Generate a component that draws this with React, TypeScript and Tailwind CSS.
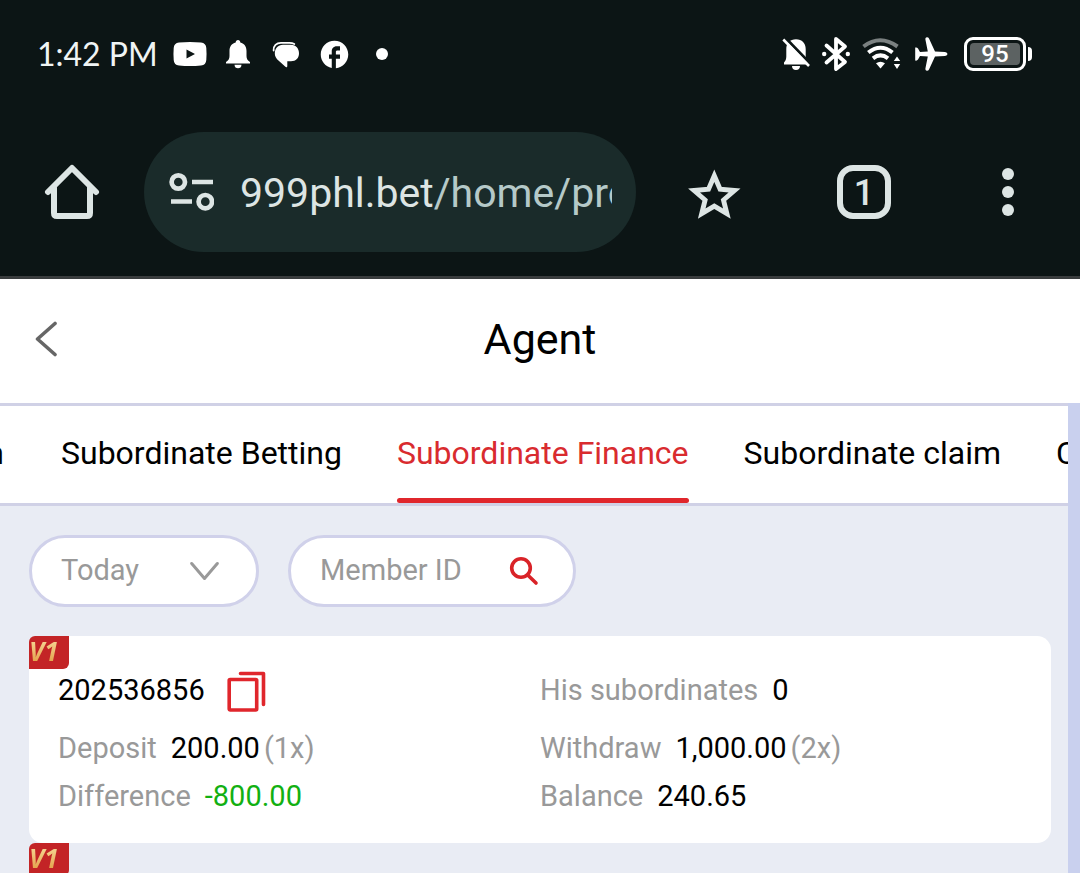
import React from "react";

const YouTubeIcon = () => (
  <svg width="34" height="36" viewBox="0 0 34 36" aria-hidden="true">
    <path fill="#fff" fillRule="evenodd" d="M6 6.500Q17 5.500 28 6.500Q33 7 33.300 12Q33.800 18 33.300 24Q33 29 28 29.500Q17 30.500 6 29.500Q1 29 .7 24Q.2 18 .7 12Q1 7 6 6.500ZM13.500 13.500V22.500L22 18Z" />
  </svg>
);

const BellIcon = () => (
  <svg width="26" height="36" viewBox="0 0 26 36" fill="#fff" aria-hidden="true">
    <path d="M13 4C14.400 4 15.300 5 15.300 6.600C19.500 7.600 21.500 11 21.500 15V20C21.500 22.500 22.500 24.500 25 26V27.500H1V26C3.500 24.500 4.500 22.500 4.500 20V15C4.500 11 6.500 7.600 10.700 6.600C10.700 5 11.600 4 13 4Z" />
    <path d="M9.500 28.700H16.500C16.500 31 15 32.300 13 32.300S9.500 31 9.500 28.700Z" />
  </svg>
);

const MessageIcon = () => (
  <svg width="28" height="36" viewBox="0 0 28 36" aria-hidden="true">
    <path d="M1.600 14.500C1.200 9.500 4.500 6.800 9 6.800H17.500C19.500 6.800 21 7.200 22.300 8" fill="none" stroke="#fff" strokeWidth="1.800" strokeLinecap="round" />
    <path d="M11 8.800H19C24 8.800 27 12.500 27 17.300S24 25.300 19 25.300H15.300V30C15.300 31.300 14.300 31.700 13.400 30.800L7 25C4 22.500 2.800 20 2.800 17.500C2.800 12.500 6 8.800 11 8.800Z" fill="#fff" />
  </svg>
);

const FacebookIcon = () => (
  <svg width="33" height="33" viewBox="0 0 24 24" aria-hidden="true">
    <path fill="#fff" d="M22 12c0-5.520-4.480-10-10-10S2 6.480 2 12c0 4.840 3.440 8.870 8 9.800V15H8v-3h2V9.500C10 7.570 11.570 6 13.500 6H16v3h-2c-.55 0-1 .45-1 1v2h3v3h-3v6.950c5.050-.5 9-4.760 9-9.950z" />
  </svg>
);

const BellOffIcon = () => (
  <svg width="28" height="36" viewBox="0 0 28 36" aria-hidden="true">
    <path fill="#fff" d="M14 3.300C20 3.300 23.700 7.500 23.700 13V20.500C23.700 23 24.500 25 26 26.500V28.500H2V26.500C3.500 25 4.300 23 4.300 20.500V13C4.300 7.500 8 3.300 14 3.300ZM10 30H18C18 32.500 16.500 34 14 34S10 32.500 10 30Z" />
    <path d="M3.500 2L29.500 29" stroke="#0c1515" strokeWidth="3" />
    <path d="M1.300 3.500L27 30" stroke="#fff" strokeWidth="2.600" />
  </svg>
);

const BluetoothIcon = () => (
  <svg width="28" height="36" viewBox="1 0 28 36" fill="none" stroke="#fff" strokeWidth="3.800" strokeLinejoin="round" strokeLinecap="round" aria-hidden="true">
    <path d="M5.500 9.500L24 26L15 33V3L24 10.500L5.500 26.500" />
    <circle cx="3.200" cy="18" r="2.200" fill="#fff" stroke="none" />
    <circle cx="26.800" cy="18" r="2.200" fill="#fff" stroke="none" />
  </svg>
);

const WifiIcon = () => (
  <svg width="40" height="36" viewBox="0 0 40 36" fill="none" stroke="#fff" strokeWidth="4" aria-hidden="true">
    <path d="M1.500 10.500Q18 -2 35.500 10.500" stroke="#7b8181" />
    <path d="M6.300 16.500Q18.500 7 30.500 16.500" />
    <path d="M11 22.300Q18.500 16.500 26 22.300" />
    <path d="M14 27.300Q18.500 24 23 27.300L18.500 32.500Z" fill="#fff" stroke="none" />
    <path d="M31.800 25L35 20.500L38.200 25ZM31.800 28L35 33L38.200 28Z" fill="#fff" stroke="none" />
  </svg>
);

const PlaneIcon = () => (
  <svg width="34" height="36" viewBox="0 0 34 36" aria-hidden="true">
    <path fill="#fff" d="M31 16Q33.500 16.500 33.500 18T31 20L21 20.500L15 33.500Q14.300 35 12.700 34.800Q11 34.300 11.400 32.500L13.800 20.500L6 20L4 23.500Q3 25 1.200 24.500V11.500Q3 11 4 12.500L6 16L13.800 15.500L11.400 3.500Q11 1.700 12.700 1.200Q14.300 1 15 2.500L21 15.500Z" />
  </svg>
);

const HomeIcon = () => (
  <svg width="56" height="56" viewBox="0 0 56 56" fill="none" stroke="#dde5e4" strokeWidth="6" strokeLinecap="round" strokeLinejoin="round" aria-hidden="true">
    <path d="M4 28L28 4L52 28" />
    <path d="M10 24V49Q10 52 13 52H43Q46 52 46 49V24" />
  </svg>
);

const SiteControlsIcon = () => (
  <svg width="46" height="40" viewBox="0 0 46 40" fill="none" stroke="#dde5e4" strokeWidth="4.700" aria-hidden="true">
    <circle cx="10.300" cy="10" r="6.700" />
    <path d="M24 10H45M3 29.500H24" />
    <circle cx="37.300" cy="29.700" r="6.700" />
  </svg>
);

const StarIcon = () => (
  <svg width="54" height="54" viewBox="0 0 54 54" fill="none" stroke="#dde5e4" strokeWidth="4.900" aria-hidden="true">
    <path d="M27.300 10.800L33.100 24.300L47.500 25.500L36.500 35L39.900 48.700L27.300 41.200L14.700 48.700L18.100 35L7.100 25.500L21.500 24.300Z" />
  </svg>
);

const MenuIcon = () => (
  <svg width="16" height="50" viewBox="0 0 16 50" fill="#dde5e4" aria-hidden="true">
    <circle cx="8" cy="7" r="6" />
    <circle cx="8" cy="25" r="6" />
    <circle cx="8" cy="43" r="6" />
  </svg>
);

const BackIcon = () => (
  <svg width="24" height="36" viewBox="0 0 24 36" fill="none" stroke="#666" strokeWidth="3.600" strokeLinecap="round" strokeLinejoin="round" aria-hidden="true">
    <path d="M20 2.500L2.500 18L20 33.500" />
  </svg>
);

const ChevronIcon = () => (
  <svg className="pointer-events-none col-start-1 row-start-1 mr-9 justify-self-end" width="30" height="20" viewBox="0 0 30 20" fill="none" stroke="#999" strokeWidth="3" strokeLinecap="round" strokeLinejoin="round" aria-hidden="true">
    <path d="M1.700 2.500L14.500 17.500L27.300 2.500" />
  </svg>
);

const SearchIcon = () => (
  <svg width="30" height="30" viewBox="0 0 30 30" fill="none" stroke="#d92328" strokeWidth="3.600" strokeLinecap="round" aria-hidden="true">
    <circle cx="12" cy="12" r="9.300" />
    <path d="M18.700 19L27 27" />
  </svg>
);

const CopyIcon = () => (
  <svg width="40" height="42" viewBox="0 0 40 42" fill="none" stroke="#e0262c" strokeWidth="3.600" strokeLinecap="round" strokeLinejoin="round" aria-hidden="true">
    <rect x="2.200" y="9.500" width="27.500" height="30.500" rx="1" />
    <path d="M13.500 3.500H36.500V34.500" />
  </svg>
);

const VipBadge = () => (
  <span className="flex h-[33px] w-10 items-start rounded-tl-md rounded-br-md bg-[#c32426]">
    <span className="bg-linear-to-b from-[#f8dfa0] to-[#e09a3a] bg-clip-text pr-1 font-['Open_Sans',sans-serif] text-[26px] leading-[30px] font-bold text-transparent italic">V1</span>
  </span>
);

const statusCell = "flex w-12 justify-center";

const StatusBar = () => (
  <div className="flex h-[108px] items-center justify-between pr-12 pl-[37px]">
    <div className="flex items-center">
      <time className="w-[129px] font-['Lato',sans-serif] text-[32px] leading-9 whitespace-nowrap text-[#f0f4f4]">1:42 PM</time>
      <span className={statusCell}><YouTubeIcon /></span>
      <span className={statusCell}><BellIcon /></span>
      <span className={statusCell}><MessageIcon /></span>
      <span className={statusCell}><FacebookIcon /></span>
      <span className={statusCell}><span className="size-3 rounded-full bg-white" /></span>
    </div>
    <div className="flex items-center gap-3">
      <BellOffIcon />
      <BluetoothIcon />
      <WifiIcon />
      <PlaneIcon />
      <div className="ml-1 flex items-center gap-0.5">
        <span className="flex h-[34px] w-[62px] rounded-[9px] border-[3px] border-white p-[3px]">
          <span className="flex flex-1 items-center justify-center rounded-[4px] bg-[#5c6262] font-['Roboto',sans-serif] text-2xl leading-none font-medium text-white">95</span>
        </span>
        <span className="h-3.5 w-1 rounded-r-[4px] bg-white" />
      </div>
    </div>
  </div>
);

const BrowserBar = () => (
  <div className="flex h-[168px] items-center pr-16 pl-11">
    <button type="button" aria-label="Home"><HomeIcon /></button>
    <div className="ml-11 flex h-[120px] min-w-0 flex-1 items-center rounded-full bg-[#1a2b2a] px-6">
      <SiteControlsIcon />
      <div className="ml-[26px] min-w-0 flex-1 overflow-hidden pt-0.5 font-['Roboto',sans-serif] text-[41px] leading-[60px] whitespace-nowrap text-[#b5c9c8]">
        <span className="text-[#dde5e4]">999phl.bet</span>/home/promote
      </div>
    </div>
    <button type="button" aria-label="Bookmark" className="ml-[51px]"><StarIcon /></button>
    <button type="button" aria-label="Tabs" className="ml-24 flex size-[54px] items-center justify-center rounded-2xl border-6 border-[#dde5e4] pt-0.5 font-['Roboto',sans-serif] text-4xl leading-none font-medium text-[#dde5e4]">1</button>
    <button type="button" aria-label="Menu" className="ml-[109px]"><MenuIcon /></button>
  </div>
);

const tabClass = "flex shrink-0 items-center border-b-[5px] border-transparent pt-0.5";

const Tabs = () => (
  <nav className="flex h-[103px] gap-[55px] overflow-hidden border-y-[3px] border-[#d0d1e6] bg-white text-[32px] leading-10 whitespace-nowrap text-black">
    <button type="button" className="flex w-1.5 shrink-0 items-center justify-end overflow-hidden border-b-[5px] border-transparent pt-0.5 pr-0.5">Commission</button>
    <button type="button" className={tabClass}>Subordinate Betting</button>
    <button type="button" aria-current="page" className="flex shrink-0 flex-col text-[#d92b2f]">
      <span className="flex flex-1 items-center pt-0.5">Subordinate Finance</span>
      <span className="h-[5px] w-full rounded-full bg-[#e0262c]" />
    </button>
    <button type="button" className={tabClass}>Subordinate claim</button>
    <button type="button" className={tabClass}>Claim</button>
  </nav>
);

const Filters = () => (
  <div className="flex gap-[29px]">
    <div className="grid h-[72px] w-[230px] items-center rounded-full border-[3px] border-[#d0d1ea] bg-white">
      <select aria-label="Period" className="col-start-1 row-start-1 h-full w-full appearance-none rounded-full bg-transparent pl-[29px] text-[29px] text-[#999] outline-none">
        <option>Today</option>
      </select>
      <ChevronIcon />
    </div>
    <div className="flex h-[72px] w-72 items-center rounded-full border-[3px] border-[#d0d1ea] bg-white pr-[34px] pl-[29px]">
      <input aria-label="Member ID" placeholder="Member ID" className="h-full min-w-0 flex-1 bg-transparent pb-0.5 text-[29px] text-black outline-none placeholder:text-[#999]" />
      <button type="button" aria-label="Search"><SearchIcon /></button>
    </div>
  </div>
);

type FieldProps = { label: string; value: string; count?: string; negative?: boolean };

const Field = ({ label, value, count, negative }: FieldProps) => (
  <div className="flex h-12 items-center">
    <span className="text-[#999]">{label}</span>
    <span className={negative ? "ml-3.5 text-[#12b012]" : "ml-3.5 text-black"}>{value}</span>
    {count && <span className="ml-1 text-[#999]">{count}</span>}
  </div>
);

const MemberCard = () => (
  <article className="relative rounded-[14px] bg-white px-[29px] pt-[30px] pb-[23px] text-[29px] leading-10">
    <div className="absolute top-0 left-0"><VipBadge /></div>
    <div className="grid grid-cols-2">
      <div className="mb-2.5 flex h-12 items-center gap-[22px] text-black">
        <span>202536856</span>
        <button type="button" aria-label="Copy" className="pt-0.5"><CopyIcon /></button>
      </div>
      <Field label="His subordinates" value="0" />
      <Field label="Deposit" value="200.00" count="(1x)" />
      <Field label="Withdraw" value="1,000.00" count="(2x)" />
      <Field label="Difference" value="-800.00" negative />
      <Field label="Balance" value="240.65" />
    </div>
  </article>
);

export default function App() {
  return (
    <div className="flex h-screen flex-col overflow-hidden bg-[#e9ecf4] font-['Roboto',sans-serif]">
      <div className="shrink-0 border-b-[3px] border-[#3a3d3e] bg-[#0c1515]">
        <StatusBar />
        <BrowserBar />
      </div>
      <header className="grid h-[124px] shrink-0 grid-cols-[1fr_auto_1fr] items-center bg-white px-[35px] pb-1">
        <button type="button" aria-label="Back" className="justify-self-start"><BackIcon /></button>
        <h1 className="text-[43px] leading-[60px] text-black">Agent</h1>
      </header>
      <main className="min-h-0 flex-1 overflow-hidden border-r-12 border-[#c9d0ee]">
        <Tabs />
        <div className="pt-[29px] pr-[17px] pl-[29px]">
          <Filters />
          <div className="mt-[29px]">
            <MemberCard />
            <VipBadge />
          </div>
        </div>
      </main>
    </div>
  );
}
